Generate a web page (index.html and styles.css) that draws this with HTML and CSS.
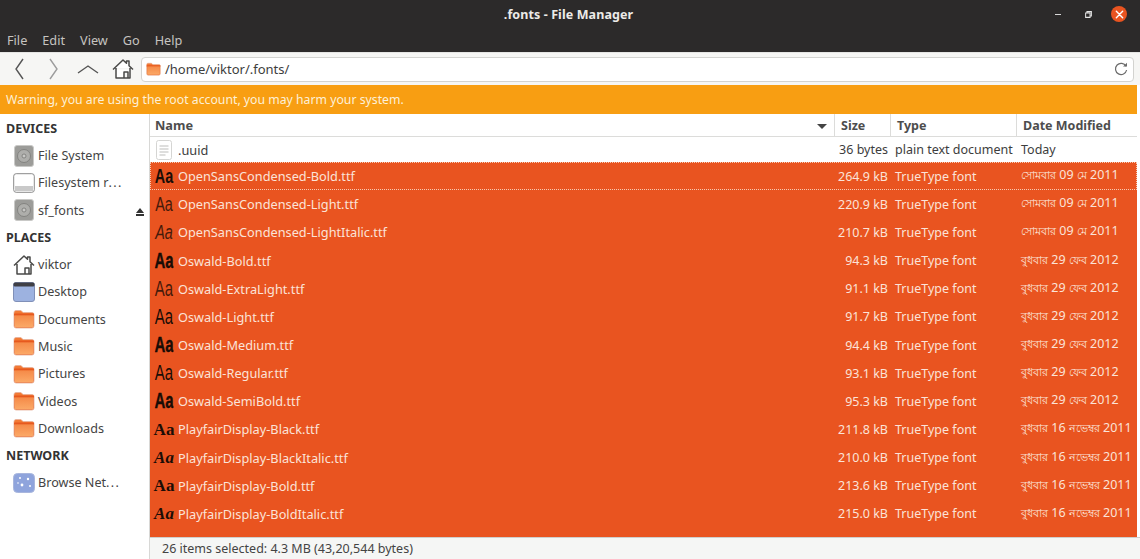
FILE: index.html
```html
<!DOCTYPE html>
<html lang="en">
<head>
<meta charset="utf-8">
<title>.fonts - File Manager</title>
<link rel="stylesheet" href="styles.css">
</head>
<body>
<svg class="defs" width="0" height="0">
  <defs>
    <linearGradient id="fold" x1="0" y1="0" x2="0" y2="1">
      <stop offset="0" stop-color="#f58a48"/>
      <stop offset="1" stop-color="#fba866"/>
    </linearGradient>
    <symbol id="folder" viewBox="0 0 22 20">
      <path d="M1 3.5Q1 1.5 3 1.5H8L10 3.5H19Q21 3.5 21 5.5V17Q21 19 19 19H3Q1 19 1 17Z" fill="#f27a35" stroke="#e6b09a" stroke-width=".8"/>
      <path d="M1 4.5H21V6.5H1Z" fill="#e6591f"/>
      <path d="M2 6.5H20V17.5Q20 18 19 18H3Q2 18 2 17.5Z" fill="url(#fold)"/>
    </symbol>
    <symbol id="disk" viewBox="0 0 20 22">
      <rect x=".5" y=".5" width="19" height="21" rx="2.5" fill="#9c9c99" stroke="#c9c9c7"/>
      <circle cx="10" cy="11" r="6.5" fill="#aeaeab" stroke="#848481"/>
      <circle cx="10" cy="11" r="2" fill="#c8c8c6" stroke="#777775" stroke-width=".8"/>
    </symbol>
    <symbol id="home" viewBox="0 0 22 22">
      <path d="M1 11.5 11 2l3.5 3.3V3H17v4.7l4 3.8M4 10v10h14V10M12 20v-6h4v6" fill="#fff" stroke="#4a4a48" stroke-width="1.5" stroke-linejoin="round"/>
    </symbol>
  </defs>
</svg>
<div class="window">
  <header class="titlebar">
    <div class="title">.fonts - File Manager</div>
    <div class="controls">
      <span class="min"></span>
      <svg class="restore" width="7" height="7" viewBox="0 0 9 9"><path d="M2.5 2V.8H8.2V6.5H7M.8 2.5H6.5V8.2H.8Z" fill="none" stroke="#e6e6e6" stroke-width="1.3"/></svg>
      <span class="close"><svg width="9" height="9" viewBox="0 0 10 10"><path d="M1.5 1.5 8.5 8.5M8.5 1.5 1.5 8.5" stroke="#fff" stroke-width="1.6" stroke-linecap="round"/></svg></span>
    </div>
  </header>
  <nav class="menubar"><span>File</span><span>Edit</span><span>View</span><span>Go</span><span>Help</span></nav>
  <div class="toolbar">
    <svg class="tool back" width="12" height="24" viewBox="0 0 12 24"><path d="M10 2 3 12l7 10" fill="none" stroke="#555" stroke-width="1.4"/></svg>
    <svg class="tool forward" width="12" height="24" viewBox="0 0 12 24"><path d="M2 2l7 10-7 10" fill="none" stroke="#9c9c9c" stroke-width="1.4"/></svg>
    <svg class="tool up" width="22" height="12" viewBox="0 0 22 12"><path d="M1 10 11 3l10 7" fill="none" stroke="#555" stroke-width="1.4"/></svg>
    <svg class="tool homeicon" width="22" height="22"><use href="#home"/></svg>
    <div class="location">
      <svg class="locfolder" width="15" height="14"><use href="#folder"/></svg>
      <span class="path">/home/viktor/.fonts/</span>
      <svg class="reload" width="14" height="14" viewBox="0 0 14 14"><path d="M12 4.2A5.6 5.6 0 1 0 12.6 8" fill="none" stroke="#6b6b6b" stroke-width="1.2"/><path d="M9 4.6h4V.8Z" fill="#6b6b6b"/></svg>
    </div>
  </div>
  <div class="warning">Warning, you are using the root account, you may harm your system.</div>
  <div class="main">
    <aside class="sidebar">
      <h2>DEVICES</h2>
      <div class="side-item"><svg width="20" height="22"><use href="#disk"/></svg><span>File System</span></div>
      <div class="side-item"><svg width="22" height="20" viewBox="0 0 22 20"><rect x=".7" y=".7" width="20.6" height="18.6" rx="2.5" fill="#fff" stroke="#8b8b8b"/><rect x="2" y="13" width="18" height="5" fill="#c9c9c9"/></svg><span>Filesystem r<span class="dots">...</span></span></div>
      <div class="side-item"><svg width="20" height="22"><use href="#disk"/></svg><span>sf_fonts</span><svg class="eject" width="8" height="8" viewBox="0 0 8 8"><path d="M4 0 8 5H0ZM0 6h8v2H0Z" fill="#333"/></svg></div>
      <h2>PLACES</h2>
      <div class="side-item"><svg width="22" height="22"><use href="#home"/></svg><span>viktor</span></div>
      <div class="side-item"><svg width="22" height="20" viewBox="0 0 22 20"><rect x=".5" y=".5" width="21" height="19" rx="2.5" fill="#9db2e0" stroke="#8090b8"/><rect x=".5" y=".5" width="21" height="4" rx="1.5" fill="#3f3f45"/></svg><span>Desktop</span></div>
      <div class="side-item"><svg width="22" height="20"><use href="#folder"/></svg><span>Documents</span></div>
      <div class="side-item"><svg width="22" height="20"><use href="#folder"/></svg><span>Music</span></div>
      <div class="side-item"><svg width="22" height="20"><use href="#folder"/></svg><span>Pictures</span></div>
      <div class="side-item"><svg width="22" height="20"><use href="#folder"/></svg><span>Videos</span></div>
      <div class="side-item"><svg width="22" height="20"><use href="#folder"/></svg><span>Downloads</span></div>
      <h2>NETWORK</h2>
      <div class="side-item"><svg width="22" height="20" viewBox="0 0 22 20"><rect x=".5" y=".5" width="21" height="19" rx="4" fill="#8fa4dc" stroke="#a9b6dd"/><g fill="#fff"><circle cx="7" cy="5" r="1"/><circle cx="15" cy="6" r="1.2"/><circle cx="9" cy="12" r="1.4"/><circle cx="17" cy="13" r="1"/><circle cx="5" cy="10" r=".8"/></g></svg><span>Browse Net<span class="dots">...</span></span></div>
    </aside>
    <section class="files">
      <div class="table">
        <div class="row head">
          <div class="c-name">Name<svg class="sort" width="10" height="5" viewBox="0 0 10 5"><path d="M0 0h10L5 5Z" fill="#444"/></svg></div>
          <div class="c-size">Size</div>
          <div class="c-type">Type</div>
          <div class="c-date">Date Modified</div>
        </div>
        <div class="row plain">
          <div class="c-name"><span class="icon"><svg width="16" height="20" viewBox="0 0 16 20"><rect x=".5" y=".5" width="15" height="19" rx="2" fill="#fff" stroke="#d5d5d3"/><path d="M3.5 6h9M3.5 9h9M3.5 12h9M3.5 15h6" stroke="#bdbdbb"/></svg></span>.uuid</div>
          <div class="c-size">36 bytes</div>
          <div class="c-type">plain text document</div>
          <div class="c-date">Today</div>
        </div>
        <div class="list">
          <div class="row sel focus"><div class="c-name"><span class="icon aa sans bold">Aa</span>OpenSansCondensed-Bold.ttf</div><div class="c-size">264.9 kB</div><div class="c-type">TrueType font</div><div class="c-date"><span class="bn">সোমবার</span> 09 <span class="bn">মে</span> 2011</div></div>
          <div class="row sel"><div class="c-name"><span class="icon aa sans light">Aa</span>OpenSansCondensed-Light.ttf</div><div class="c-size">220.9 kB</div><div class="c-type">TrueType font</div><div class="c-date"><span class="bn">সোমবার</span> 09 <span class="bn">মে</span> 2011</div></div>
          <div class="row sel"><div class="c-name"><span class="icon aa sans light ital">Aa</span>OpenSansCondensed-LightItalic.ttf</div><div class="c-size">210.7 kB</div><div class="c-type">TrueType font</div><div class="c-date"><span class="bn">সোমবার</span> 09 <span class="bn">মে</span> 2011</div></div>
          <div class="row sel"><div class="c-name"><span class="icon aa narrow bold">Aa</span>Oswald-Bold.ttf</div><div class="c-size">94.3 kB</div><div class="c-type">TrueType font</div><div class="c-date"><span class="bn">বুধবার</span> 29 <span class="bn">ফেব</span> 2012</div></div>
          <div class="row sel"><div class="c-name"><span class="icon aa narrow light">Aa</span>Oswald-ExtraLight.ttf</div><div class="c-size">91.1 kB</div><div class="c-type">TrueType font</div><div class="c-date"><span class="bn">বুধবার</span> 29 <span class="bn">ফেব</span> 2012</div></div>
          <div class="row sel"><div class="c-name"><span class="icon aa narrow">Aa</span>Oswald-Light.ttf</div><div class="c-size">91.7 kB</div><div class="c-type">TrueType font</div><div class="c-date"><span class="bn">বুধবার</span> 29 <span class="bn">ফেব</span> 2012</div></div>
          <div class="row sel"><div class="c-name"><span class="icon aa narrow bold">Aa</span>Oswald-Medium.ttf</div><div class="c-size">94.4 kB</div><div class="c-type">TrueType font</div><div class="c-date"><span class="bn">বুধবার</span> 29 <span class="bn">ফেব</span> 2012</div></div>
          <div class="row sel"><div class="c-name"><span class="icon aa narrow">Aa</span>Oswald-Regular.ttf</div><div class="c-size">93.1 kB</div><div class="c-type">TrueType font</div><div class="c-date"><span class="bn">বুধবার</span> 29 <span class="bn">ফেব</span> 2012</div></div>
          <div class="row sel"><div class="c-name"><span class="icon aa narrow bold">Aa</span>Oswald-SemiBold.ttf</div><div class="c-size">95.3 kB</div><div class="c-type">TrueType font</div><div class="c-date"><span class="bn">বুধবার</span> 29 <span class="bn">ফেব</span> 2012</div></div>
          <div class="row sel"><div class="c-name"><span class="icon aa serif bold">Aa</span>PlayfairDisplay-Black.ttf</div><div class="c-size">211.8 kB</div><div class="c-type">TrueType font</div><div class="c-date"><span class="bn">বুধবার</span> 16 <span class="bn">নভেম্বর</span> 2011</div></div>
          <div class="row sel"><div class="c-name"><span class="icon aa serif bold ital">Aa</span>PlayfairDisplay-BlackItalic.ttf</div><div class="c-size">210.0 kB</div><div class="c-type">TrueType font</div><div class="c-date"><span class="bn">বুধবার</span> 16 <span class="bn">নভেম্বর</span> 2011</div></div>
          <div class="row sel"><div class="c-name"><span class="icon aa serif bold">Aa</span>PlayfairDisplay-Bold.ttf</div><div class="c-size">213.6 kB</div><div class="c-type">TrueType font</div><div class="c-date"><span class="bn">বুধবার</span> 16 <span class="bn">নভেম্বর</span> 2011</div></div>
          <div class="row sel"><div class="c-name"><span class="icon aa serif bold ital">Aa</span>PlayfairDisplay-BoldItalic.ttf</div><div class="c-size">215.0 kB</div><div class="c-type">TrueType font</div><div class="c-date"><span class="bn">বুধবার</span> 16 <span class="bn">নভেম্বর</span> 2011</div></div>
        </div>
      </div>
      <footer class="status">26 items selected: 4.3 MB (43,20,544 bytes)</footer>
    </section>
  </div>
</div>
</body>
</html>
```

FILE: styles.css
```css
* { box-sizing: border-box; }
html, body { margin: 0; height: 100%; overflow: hidden; background: #fff; }
body { font-family: "Noto Sans", "Open Sans", sans-serif; font-size: 12px; color: #3d3d3d; }
.defs { position: absolute; }
.window { display: flex; flex-direction: column; width: 1140px; height: 559px; }

.titlebar { height: 28px; background: #2c2a2a; color: #ecebe8; display: flex; align-items: center; justify-content: center; position: relative; flex: none; }
.title { font-size: 12.5px; font-weight: 700; padding-top: 1px; letter-spacing: .1px; margin-left: -3px; }
.controls { position: absolute; right: 13px; top: 6px; display: flex; align-items: center; }
.min { width: 6px; height: 1px; background: #d8d8d8; margin-right: 24px; }
.restore { margin-right: 19px; }
.close { width: 16px; height: 16px; border-radius: 50%; background: #e95420; display: flex; align-items: center; justify-content: center; }

.menubar { height: 24px; background: #2c2a2a; color: #c6c4c0; display: flex; gap: 15px; padding: 0 0 0 7px; align-items: center; font-size: 12.7px; flex: none; }

.toolbar { height: 33px; background: #f6f6f4; display: flex; align-items: center; padding-right: 6px; border-top: 1px solid #e5e5e3; flex: none; }
.tool { flex: none; }
.back { margin-left: 13px; }
.forward { margin-left: 23px; }
.up { margin-left: 17px; }
.homeicon { margin-left: 13px; }
.location { flex: 1; height: 25px; margin-left: 7px; background: #fff; border: 1px solid #d3d3d0; border-radius: 4px; display: flex; align-items: center; padding: 0 5px 0 4px; }
.path { flex: 1; margin-left: 4px; font-size: 13px; color: #3d3d3d; }

.warning { height: 29px; background: #f89e12; color: #fdf0d8; width: 1137px; padding-left: 6px; display: flex; align-items: center; font-size: 12.25px; flex: none; }

.main { flex: 1; display: flex; min-height: 0; }
.sidebar { width: 150px; background: #fff; border-right: 1px solid #d8d8d6; flex: none; padding-top: 5px; }
.sidebar h2 { margin: 0; padding: 1px 0 0 6px; height: 19px; font-size: 12.5px; font-weight: 700; color: #333; line-height: 18px; }
.side-item { height: 27.3px; display: flex; align-items: center; padding-left: 13px; font-size: 12.6px; color: #444; position: relative; }
.side-item > svg:first-child { width: 22px; flex: none; margin-right: 3px; }
.dots { letter-spacing: 1.4px; }
.sidebar h2 + .side-item { margin-top: 4px; }
.sidebar .side-item + h2 { margin-top: 4px; }
.eject { position: absolute; right: 5px; top: 11px; }

.files { flex: 1; min-width: 0; display: flex; flex-direction: column; background: #fff; overflow: hidden; }
.table { flex: 1; min-height: 0; padding-right: 3px; display: flex; flex-direction: column; }
.row { display: grid; grid-template-columns: 685px 56px 126px 120px; align-items: center; white-space: nowrap; font-size: 12.5px; }
.head { height: 23px; font-weight: 700; color: #4d4d4d; border-bottom: 1px solid #dcdcda; flex: none; }
.head > div { height: 100%; display: flex; align-items: center; padding-left: 6px; border-right: 1px solid #dcdcda; position: relative; }
.head .c-name { padding-left: 5px; }
.head .c-date { border-right: 0; }
.sort { position: absolute; right: 7px; top: 10px; }
.plain { height: 25px; color: #3d3d3d; flex: none; }
.c-name { display: flex; align-items: center; font-size: 12.75px; }
.c-size { text-align: right; padding-right: 3px; }
.c-type { padding-left: 4px; }
.c-date { padding-left: 4px; }
.bn { font-size: 11px; }
.icon { width: 28px; flex: none; display: flex; justify-content: center; align-items: center; }

.list { flex: 1; background: #e95420; min-height: 0; overflow: hidden; }
.sel { height: 28.17px; color: #fbe3d8; }
.focus { outline: 1px dotted #f7c9b2; outline-offset: -1px; }
.aa { color: #1a0d06; font-size: 20px; line-height: 1; height: 24px; overflow: hidden; }
.sans { font-family: "Liberation Sans", sans-serif; transform: scaleX(.72); }
.narrow { font-family: "Liberation Sans", sans-serif; transform: scaleX(.68); font-size: 22px; }
.narrow.bold { -webkit-text-stroke: .4px #100804; }
.serif { font-family: "Liberation Serif", serif; font-size: 17px; }
.bold { font-weight: 700; }
.light { font-weight: 400; opacity: .8; }
.ital { font-style: italic; }

.status { height: 22px; background: #f5f6f5; border-top: 1px solid #cfcfcd; padding-left: 12px; display: flex; align-items: center; font-size: 12.5px; color: #444; flex: none; }
```
